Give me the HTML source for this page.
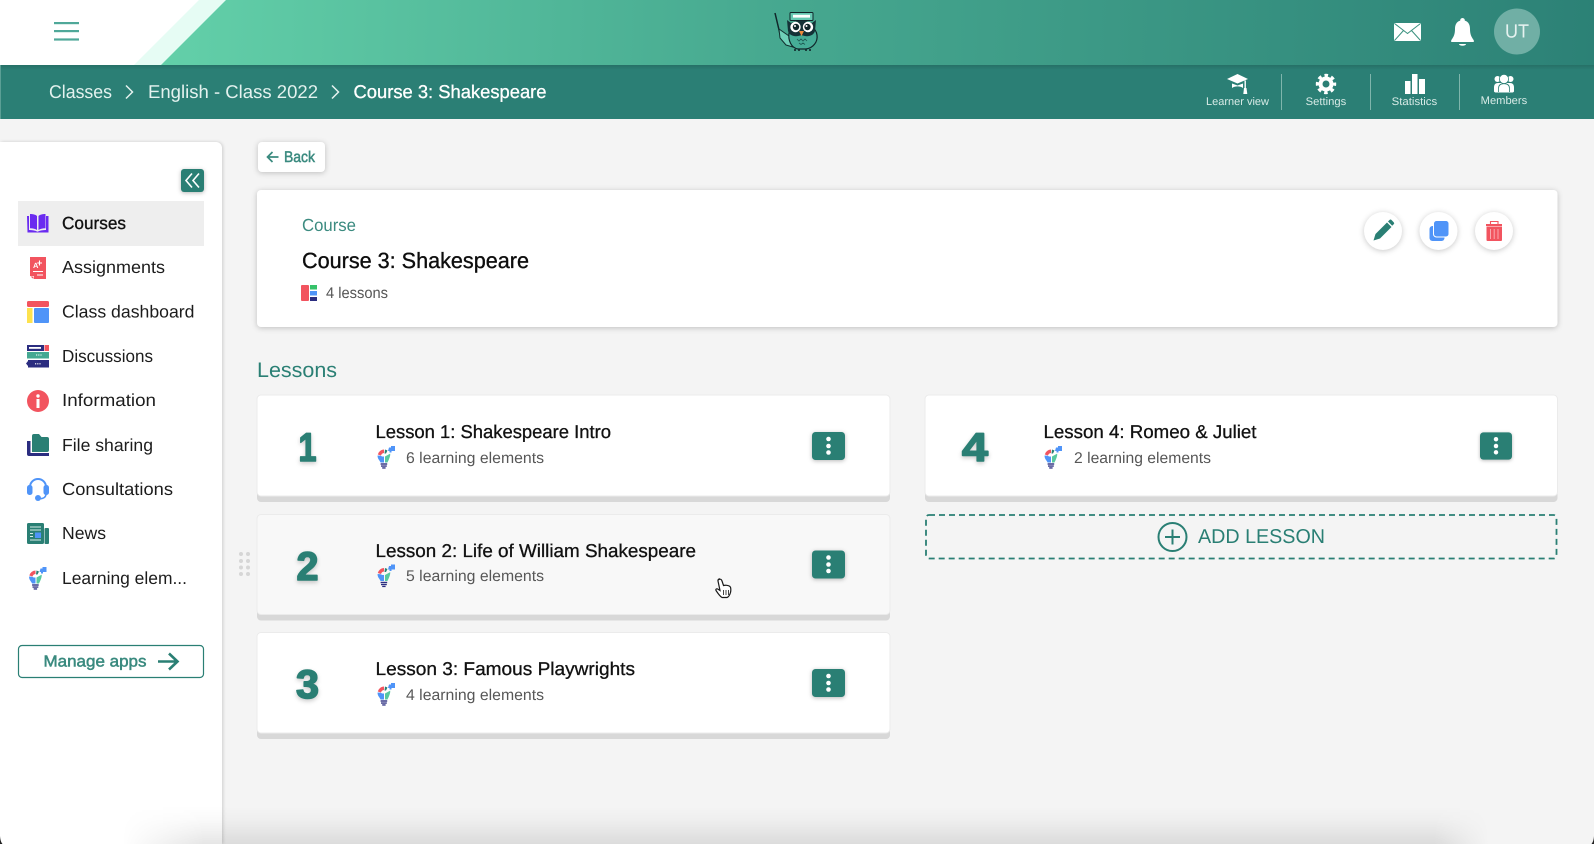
<!DOCTYPE html>
<html lang="en"><head><meta charset="utf-8"><title>Course 3: Shakespeare</title>
<style>
html,body{margin:0;padding:0;width:1594px;height:844px;overflow:hidden;background:#f4f4f4}
svg{display:block;position:absolute;left:0;top:0}
text{font-family:"Liberation Sans",sans-serif;text-rendering:geometricPrecision}
.nav{font-size:17.5px;fill:#1c1c1c}
.bc{font-size:18.5px;fill:#e4f2ef}
.lb{font-size:11px;fill:#d8ebe7}
.tt{font-size:18.5px;fill:#111;stroke:#111;stroke-width:.3px}
.sb{font-size:15.5px;fill:#575757}
.num{font-size:40px;font-weight:bold;fill:#2a7f74;stroke:#2a7f74;stroke-width:1.6px;stroke-linejoin:round;filter:drop-shadow(0 2px 2px rgba(0,0,0,.2))}
.card{fill:#fff}
.strip{fill:#d8d8d8}
.soft{filter:drop-shadow(0 1px 3px rgba(0,0,0,.22))}
.mb{fill:#2a7f74;filter:drop-shadow(0 1px 2px rgba(0,0,0,.28))}
</style></head><body>
<svg width="1594" height="844" viewBox="0 0 1594 844" xmlns="http://www.w3.org/2000/svg">
<defs>
<linearGradient id="hg" gradientUnits="userSpaceOnUse" x1="160" y1="0" x2="1594" y2="65"><stop offset="0" stop-color="#63d0a9"/><stop offset=".42" stop-color="#47a990"/><stop offset="1" stop-color="#2c8176"/></linearGradient>
<linearGradient id="bs" x1="0" y1="0" x2="0" y2="1"><stop offset="0" stop-color="#000" stop-opacity=".12"/><stop offset="1" stop-color="#000" stop-opacity="0"/></linearGradient>
<linearGradient id="bv" x1="0" y1="0" x2="0" y2="1"><stop offset="0" stop-color="#000" stop-opacity="0"/><stop offset=".35" stop-color="#000" stop-opacity=".02"/><stop offset=".7" stop-color="#000" stop-opacity=".06"/><stop offset="1" stop-color="#000" stop-opacity=".1"/></linearGradient>
<linearGradient id="bh" gradientUnits="userSpaceOnUse" x1="122" y1="0" x2="1489" y2="0"><stop offset="0" stop-color="#000"/><stop offset=".02" stop-color="#555"/><stop offset=".06" stop-color="#fff"/><stop offset=".96" stop-color="#fff"/><stop offset=".985" stop-color="#555"/><stop offset="1" stop-color="#000"/></linearGradient>
<mask id="bm" maskUnits="userSpaceOnUse" x="122" y="806" width="1367" height="38"><rect x="122" y="806" width="1367" height="38" fill="url(#bh)"/></mask>
<symbol id="bulb" viewBox="0 0 18 23" overflow="visible">
<path d="M7 3.5A6.5 6.5 0 0 0 .8 8.5L4 9.5A3.5 3.5 0 0 1 7 7Z" fill="#f2545f"/>
<path d="M.6 9.5C.3 12.5 2.4 14 3.6 16.5H7V10.5H5.2L3.6 9.7Z" fill="#4f94f8"/>
<path d="M8 10.5L13.2 7.6C13.5 10 12 13.5 10.4 16.5H8Z" fill="#58c9a0"/>
<path d="M8 3.5L10.5 4.5 9 7.5H7.5Z" fill="#2a7f74"/>
<path d="M12 1.5H14V0H18V5H14.5V6.5H12.5V5H11Z" fill="#4f94f8"/>
<rect x="3.6" y="17.3" width="6.6" height="1.4" fill="#2b2d80"/><rect x="4" y="19.4" width="5.8" height="1.3" fill="#2b2d80"/><rect x="5.2" y="21.3" width="3.4" height="1.3" fill="#2b2d80"/>
</symbol>
<symbol id="dots" viewBox="0 0 33 28" overflow="visible">
<rect width="33" height="28" rx="3.5" class="mb"/>
<circle cx="16.5" cy="7" r="2.3" fill="#fff"/><circle cx="16.5" cy="14" r="2.3" fill="#fff"/><circle cx="16.5" cy="20.5" r="2.3" fill="#fff"/>
</symbol>
</defs>

<!-- page -->
<rect width="1594" height="844" fill="#f4f4f4"/>

<!-- top header -->
<rect width="1594" height="65" fill="#fff"/>
<polygon points="134,65 199,0 240,0 175,65" fill="#e6fcf4"/>
<polygon points="161,65 226,0 1594,0 1594,65" fill="url(#hg)"/>
<g fill="#4fa899"><rect x="54" y="22" width="25" height="2.2"/><rect x="54" y="30" width="25" height="2.2"/><rect x="54" y="38.4" width="25" height="2.2"/></g>

<!-- owl logo -->
<g>
<path d="M775 13L780 34" stroke="#10262a" stroke-width="1.5" fill="none"/>
<path d="M779 29L789 36 795 44 793 47 786 45 780 38Z" fill="#6fd0b8" stroke="#12302f" stroke-width="1"/>
<path d="M789 33C788 40 791 48 798 49H806C813 48 818 42 817 35 816 28 810 25 802 25 796 25 790 27 789 33Z" fill="#46ad97" stroke="#10262a" stroke-width="1.2"/>
<rect x="790" y="12.5" width="23" height="8" rx="1" fill="#66c8b2" stroke="#10262a" stroke-width="1"/>
<rect x="793" y="14.8" width="17" height="2.8" fill="#fff"/>
<path d="M787 20L791 23C797 20 806 20 812 23L816 20 815 31C813 37 806 37 801.5 35 797 37 790 37 788 31Z" fill="#143237"/>
<circle cx="795.500" cy="27" r="5.200" fill="#fff"/><circle cx="808" cy="27" r="5.200" fill="#fff"/>
<circle cx="796" cy="27" r="3.200" fill="#10262a"/><circle cx="807.500" cy="27" r="3.200" fill="#10262a"/>
<circle cx="795" cy="26" r="1" fill="#fff"/><circle cx="806.500" cy="26" r="1" fill="#fff"/>
<path d="M799 31H804L801.500 36Z" fill="#ef8a3c"/>
<path d="M797 39l2 2 2-2 2 2 2-2 2 2M799 43l2 1.500 2-1.500 2 1.500" stroke="#1d5a52" stroke-width=".8" fill="none"/>
<path d="M795 49v2M799 49v2M806 49v2M810 49v2" stroke="#10262a" stroke-width="1.600"/>
</g>

<!-- header right icons -->
<g>
<rect x="1394" y="23" width="27" height="18" rx="1" fill="#fff"/>
<path d="M1394.5 23.5L1407.5 33.5 1420.5 23.5M1394.5 40.5L1403.5 30.5M1420.5 40.5L1411.5 30.5" stroke="#3a917f" stroke-width="1" fill="none"/>
<path d="M1462.5 18a2.3 2.3 0 0 1 2.3 2.6c4 1.2 5.200 4.600 5.200 8.400 0 5.500 1.500 8 3.800 11.300v1.700h-22.600v-1.700c2.300-3.300 3.800-5.800 3.800-11.300 0-3.800 1.200-7.200 5.200-8.400a2.300 2.300 0 0 1 2.300-2.600Z" fill="#fff"/>
<path d="M1459 44h7a3.500 1.800 0 0 1-7 0Z" fill="#fff"/>
<circle cx="1517" cy="31.500" r="23" fill="#70afa5"/>
<text x="1505" y="37.500" font-size="19" fill="#e6f2f0" textLength="24" lengthAdjust="spacingAndGlyphs">UT</text>
</g>

<!-- sub bar -->
<rect y="65" width="1594" height="54" fill="#2b7f75"/>
<rect y="65" width="1594" height="5" fill="url(#bs)"/>
<rect x="0" y="65" width="1" height="54" fill="#5b9f95"/>
<text class="bc" x="49" y="98" textLength="63" lengthAdjust="spacingAndGlyphs">Classes</text>
<path d="M126 85.500L132.500 92 126 98.500" stroke="#e4f2ef" stroke-width="1.500" fill="none"/>
<text class="bc" x="148" y="98" textLength="170" lengthAdjust="spacingAndGlyphs">English - Class 2022</text>
<path d="M332 85.500L338.500 92 332 98.500" stroke="#e4f2ef" stroke-width="1.500" fill="none"/>
<text class="bc" x="353.500" y="98" textLength="193" lengthAdjust="spacingAndGlyphs" style="fill:#fff;stroke:#fff;stroke-width:.3px">Course 3: Shakespeare</text>

<g fill="#fff">
<!-- cap -->
<path d="M1237.500 74L1248 79 1237.500 83.500 1227 79Z"/>
<path d="M1232 83.500L1237.500 85.500 1243 83.500V88C1240 85.800 1235 86 1232 88Z"/>
<rect x="1244.500" y="80.500" width="1.400" height="8"/><path d="M1244 88h2.500l.8 6h-4Z"/>
<!-- gear -->
<circle cx="1326" cy="84" r="5.500" fill="none" stroke="#fff" stroke-width="4"/>
<circle cx="1326" cy="84" r="8.500" fill="none" stroke="#fff" stroke-width="3.400" stroke-dasharray="3.500 3.176" stroke-dashoffset="1.750"/>
<!-- stats -->
<rect x="1405" y="81" width="5.500" height="13"/><rect x="1412" y="74" width="5.500" height="20"/><rect x="1419" y="79" width="6" height="15"/>
<!-- members -->
<circle cx="1497.500" cy="79" r="3"/><circle cx="1510.500" cy="79" r="3"/>
<path d="M1494 91.500v-4c0-3 1.500-4.500 4-4.500h12c2.500 0 4 1.500 4 4.500v4c-.5.800-1 1-2 1h-16c-1 0-1.500-.2-2-1Z"/>
<circle cx="1504" cy="79" r="4.600" stroke="#2b7f75" stroke-width=".8"/>
<path d="M1498.500 92v-3.500c0-3 2-4.800 5.500-4.800s5.500 1.800 5.500 4.800V92" stroke="#2b7f75" stroke-width=".8"/>
</g>
<g fill="#7fb5ac"><rect x="1281" y="74" width="1" height="36"/><rect x="1370" y="74" width="1" height="36"/><rect x="1459" y="74" width="1" height="36"/></g>
<text class="lb" x="1206" y="105" textLength="63" lengthAdjust="spacingAndGlyphs">Learner view</text>
<text class="lb" x="1305.700" y="105" textLength="40.500" lengthAdjust="spacingAndGlyphs">Settings</text>
<text class="lb" x="1391.700" y="105" textLength="45.500" lengthAdjust="spacingAndGlyphs">Statistics</text>
<text class="lb" x="1480.700" y="104" textLength="46.500" lengthAdjust="spacingAndGlyphs">Members</text>

<!-- sidebar -->
<path d="M0 142H216a6 6 0 0 1 6 6V844H0Z" fill="#fff" style="filter:drop-shadow(1px 0 1.500px rgba(0,0,0,.16))"/>
<rect x="181" y="169" width="23" height="23" rx="3" class="mb"/>
<path d="M192 173.500L186 180.500 192 187.500M199 173.500L193 180.500 199 187.500" stroke="#fff" stroke-width="1.600" fill="none"/>
<rect x="18" y="201" width="186" height="45" fill="#eeeeee"/>

<!-- nav icons -->
<path d="M27 216h2v14c3 0 6 .3 8.500 1.800 2.500-1.500 5.500-1.800 8.500-1.800v-14h2.500v16.500h-21Z" fill="#6a2bf0"/>
<path d="M30 214c3 0 5.500.5 7 2v14c-1.500-1.200-4-1.800-7-1.800ZM45.500 214c-3 0-5.500.5-7 2v14c1.500-1.200 4-1.800 7-1.800Z" fill="#6a2bf0"/>

<path d="M30 257h16v22H34v-3h-4Z" fill="#f2545f"/><path d="M30.500 276.500h3v2.500Z" fill="#f2545f"/>
<text x="33" y="268" font-size="7.500" font-weight="bold" fill="#fff">A</text>
<path d="M39.500 260.500v5M37.200 263h4.800M33 271.500h10M37 275h6" stroke="#fff" stroke-width="1.100"/>

<rect x="27" y="301" width="22" height="6" rx="1.500" fill="#f2545f"/>
<rect x="27" y="308" width="5.500" height="15" fill="#fde24e"/>
<rect x="34" y="308" width="15" height="15" rx="1" fill="#4f94f8"/>

<rect x="27" y="345" width="17" height="6" fill="#2b2d80"/><rect x="29" y="347" width="12" height="1.800" fill="#fff"/>
<rect x="44.500" y="345" width="4.500" height="6" fill="#f2545f"/>
<rect x="27" y="352" width="22" height="6.500" fill="#45a892"/><path d="M36 355h6" stroke="#fff" stroke-width="1.100" stroke-dasharray="1.200 1"/>
<rect x="28" y="360" width="21" height="7.500" fill="#2b2d80"/><path d="M28 361l-2 2.500 2 2.500Z" fill="#2b2d80"/><path d="M35 363.800h6" stroke="#fff" stroke-width="1.100" stroke-dasharray="1.200 1"/>

<circle cx="38" cy="401" r="11" fill="#f2545f"/><circle cx="38" cy="396" r="1.700" fill="#fff"/><rect x="36.500" y="399" width="3" height="9" fill="#fff"/>

<path d="M27 441h3.500v12H49v3H29a2 2 0 0 1-2-2Z" fill="#2b2d80"/>
<path d="M32 436a2 2 0 0 1 2-2h5l2.500 3H47a2 2 0 0 1 2 2v11a2 2 0 0 1-2 2H32Z" fill="#2a7f74"/>

<path d="M30 489v-2a8 8 0 0 1 16 0v2" fill="none" stroke="#4f94f8" stroke-width="2"/>
<rect x="27" y="485" width="5.500" height="10" rx="2.500" fill="#4f94f8"/><rect x="43.500" y="485" width="5.500" height="10" rx="2.500" fill="#4f94f8"/>
<path d="M46 494c0 3-2 4.500-6 4.800" fill="none" stroke="#4f94f8" stroke-width="1.500"/>
<circle cx="38" cy="498" r="3" fill="#4f94f8"/>

<rect x="27" y="523" width="17" height="21" rx="1.500" fill="#2a7f74"/><rect x="44.500" y="528" width="4.500" height="16" rx="1" fill="#2a7f74"/>
<path d="M30 527h11M30 530h11M30 540h11" stroke="#d7ece8" stroke-width="1"/><path d="M30 533.500h3M30 536.500h3" stroke="#d7ece8" stroke-width="1"/>
<rect x="35" y="532.500" width="6" height="5.500" fill="#4f94f8"/>

<use href="#bulb" x="28" y="567" width="19" height="23"/>

<!-- nav labels -->
<text class="nav" x="62" y="229" textLength="64" lengthAdjust="spacingAndGlyphs" style="fill:#111;stroke:#111;stroke-width:.35px">Courses</text>
<text class="nav" x="62" y="273" textLength="103" lengthAdjust="spacingAndGlyphs">Assignments</text>
<text class="nav" x="62" y="317.500" textLength="132.500" lengthAdjust="spacingAndGlyphs">Class dashboard</text>
<text class="nav" x="62" y="362" textLength="91" lengthAdjust="spacingAndGlyphs">Discussions</text>
<text class="nav" x="62" y="406" textLength="94" lengthAdjust="spacingAndGlyphs">Information</text>
<text class="nav" x="62" y="451" textLength="91" lengthAdjust="spacingAndGlyphs">File sharing</text>
<text class="nav" x="62" y="495" textLength="111" lengthAdjust="spacingAndGlyphs">Consultations</text>
<text class="nav" x="62" y="539" textLength="44" lengthAdjust="spacingAndGlyphs">News</text>
<text class="nav" x="62" y="584" textLength="125" lengthAdjust="spacingAndGlyphs">Learning elem...</text>

<rect x="18.500" y="645.500" width="185" height="32" rx="3.500" fill="#fff" stroke="#2a7f74" stroke-width="1.200"/>
<text x="43.500" y="666.700" font-size="16" textLength="103" lengthAdjust="spacingAndGlyphs" style="fill:#3a8a7f;stroke:#3a8a7f;stroke-width:.5px">Manage apps</text>
<path d="M158 661.500H177M169 653.500L177.500 661.500 169 669.500" stroke="#2a7f74" stroke-width="2.600" fill="none"/>

<!-- back -->
<rect x="258" y="142" width="67" height="30" rx="4" class="card soft"/>
<path d="M278.500 157H268M272.500 152L267.500 157 272.500 162" stroke="#3a8a7f" stroke-width="1.700" fill="none"/>
<text x="284" y="162" font-size="15.500" textLength="31" lengthAdjust="spacingAndGlyphs" style="fill:#3a8a7f;stroke:#3a8a7f;stroke-width:.5px">Back</text>

<!-- course card -->
<rect x="257" y="190" width="1300.500" height="137" rx="4" class="card soft"/>
<text x="302" y="231" font-size="17.500" fill="#3c8b80" textLength="54" lengthAdjust="spacingAndGlyphs">Course</text>
<text x="302" y="268" font-size="22" fill="#0d0d0d" stroke="#0d0d0d" stroke-width=".35" textLength="227" lengthAdjust="spacingAndGlyphs">Course 3: Shakespeare</text>
<rect x="301" y="285" width="8" height="16" rx="1" fill="#f2545f"/>
<rect x="310" y="285" width="7" height="4.500" fill="#36c26a"/><rect x="310" y="291" width="7" height="4.500" fill="#4f94f8"/><rect x="310" y="297" width="7" height="4" fill="#2b2d80"/>
<text x="326" y="298" font-size="15.500" fill="#555" textLength="62" lengthAdjust="spacingAndGlyphs">4 lessons</text>

<circle cx="1383" cy="231" r="19" class="card soft"/>
<path d="M1373.500 240.500L1375.500 234 1387 222.500 1391.500 227 1380 238.500Z" fill="#2a7f74"/>
<path d="M1388 221.500l1.500-1.500a1.500 1.500 0 0 1 2 0l2.200 2.200a1.500 1.500 0 0 1 0 2l-1.500 1.500Z" fill="#2a7f74"/>
<circle cx="1438.500" cy="231" r="19" class="card soft"/>
<rect x="1429.500" y="226" width="15" height="15" rx="3" fill="#4f94f8"/>
<rect x="1433.500" y="220.500" width="15.500" height="16.500" rx="3" fill="#4f94f8" stroke="#fff" stroke-width="1"/>
<circle cx="1494" cy="231" r="19" class="card soft"/>
<path d="M1486.500 226.500H1502V240a1 1 0 0 1-1 1h-13.500a1 1 0 0 1-1-1Z" fill="#f2545f"/>
<rect x="1486" y="224" width="16" height="2" fill="#f2545f"/>
<path d="M1490.500 224v-2.500h7.500V224" fill="none" stroke="#f2545f" stroke-width="1.100"/>
<path d="M1490.500 229v10M1494.200 229v10M1498 229v10" stroke="#f9a9af" stroke-width="1"/>

<text x="257" y="377" font-size="21" fill="#2a7f74" textLength="80" lengthAdjust="spacingAndGlyphs">Lessons</text>

<!-- lesson cards -->
<g>
<rect x="257" y="395" width="633" height="107" rx="4" class="strip"/><rect x="257" y="395" width="633" height="101" rx="4" class="card" stroke="#ebebeb"/>
<rect x="257" y="514.500" width="633" height="106" rx="4" class="strip"/><rect x="257" y="514.500" width="633" height="100" rx="4" fill="#f8f8f8" stroke="#ebebeb"/>
<rect x="257" y="632.500" width="633" height="106.500" rx="4" class="strip"/><rect x="257" y="632.500" width="633" height="100.500" rx="4" class="card" stroke="#ebebeb"/>
<rect x="925" y="395" width="632.500" height="107" rx="4" class="strip"/><rect x="925" y="395" width="632.500" height="101" rx="4" class="card" stroke="#ebebeb"/>
</g>

<text class="num" x="298.500" y="461" textLength="18" lengthAdjust="spacingAndGlyphs">1</text>
<text class="num" x="296.500" y="580" textLength="22" lengthAdjust="spacingAndGlyphs">2</text>
<text class="num" x="296" y="698" textLength="23" lengthAdjust="spacingAndGlyphs">3</text>
<text class="num" x="962" y="461" textLength="26" lengthAdjust="spacingAndGlyphs">4</text>

<text class="tt" x="375.500" y="438" textLength="235.500" lengthAdjust="spacingAndGlyphs">Lesson 1: Shakespeare Intro</text>
<text class="tt" x="375.500" y="557" textLength="320.500" lengthAdjust="spacingAndGlyphs">Lesson 2: Life of William Shakespeare</text>
<text class="tt" x="375.500" y="675" textLength="259.500" lengthAdjust="spacingAndGlyphs">Lesson 3: Famous Playwrights</text>
<text class="tt" x="1043.500" y="438" textLength="213" lengthAdjust="spacingAndGlyphs">Lesson 4: Romeo &amp; Juliet</text>

<text class="sb" x="406" y="463" textLength="138" lengthAdjust="spacingAndGlyphs">6 learning elements</text>
<text class="sb" x="406" y="581" textLength="138" lengthAdjust="spacingAndGlyphs">5 learning elements</text>
<text class="sb" x="406" y="700" textLength="138" lengthAdjust="spacingAndGlyphs">4 learning elements</text>
<text class="sb" x="1074" y="463" textLength="137" lengthAdjust="spacingAndGlyphs">2 learning elements</text>

<use href="#bulb" x="377" y="446" width="18" height="23"/>
<use href="#bulb" x="377" y="564.500" width="18" height="23"/>
<use href="#bulb" x="377" y="683" width="18" height="23"/>
<use href="#bulb" x="1044" y="446" width="18" height="23"/>

<use href="#dots" x="812" y="432" width="33" height="28"/>
<use href="#dots" x="812" y="550.500" width="33" height="28"/>
<use href="#dots" x="812" y="669" width="33" height="28"/>
<use href="#dots" x="1480" y="432" width="32" height="28"/>

<!-- drag handle -->
<g fill="#d6d6d6"><circle cx="241" cy="554" r="2"/><circle cx="248" cy="554" r="2"/><circle cx="241" cy="561" r="2"/><circle cx="248" cy="561" r="2"/><circle cx="241" cy="567.500" r="2"/><circle cx="248" cy="567.500" r="2"/><circle cx="241" cy="574" r="2"/><circle cx="248" cy="574" r="2"/></g>

<!-- add lesson -->
<rect x="926" y="515" width="630.500" height="43.500" rx="3" fill="none" stroke="#2a7f74" stroke-width="1.800" stroke-dasharray="6 4"/>
<circle cx="1172.500" cy="537" r="14" fill="none" stroke="#2a7f74" stroke-width="2"/>
<path d="M1172.500 529.500v15M1165 537h15" stroke="#2a7f74" stroke-width="2"/>
<text x="1198" y="543" font-size="20" fill="#2a7f74" textLength="127" lengthAdjust="spacingAndGlyphs">ADD LESSON</text>

<!-- cursor -->
<path d="M719 579.500c1.500-.8 2.500 0 3 1.500l1.500 4.500c1.500-.5 5-.3 6.500 1 1 1 1 4 .5 6-.7 2.500-2 4.500-3.500 5h-5c-2-1-4-4-6-7-.6-1 .3-2 1.500-1.600l2.500 1.600-2-9.500c-.2-.8.200-1.500 1-2Z" fill="#fff" stroke="#1a1a1a" stroke-width="1.200"/>
<path d="M723.500 590v5M726 590v5M728.500 590v5" stroke="#1a1a1a" stroke-width=".8"/>

<!-- bottom shadow -->
<rect x="122" y="806" width="1367" height="38" fill="url(#bv)" mask="url(#bm)"/>
<!-- screen corners -->
<path d="M0 836V844H2.500C1 842 .3 840 0 836Z" fill="#222"/>
<path d="M1594 836V844H1591.500C1593 842 1593.700 840 1594 836Z" fill="#222"/>
</svg>
</body></html>
